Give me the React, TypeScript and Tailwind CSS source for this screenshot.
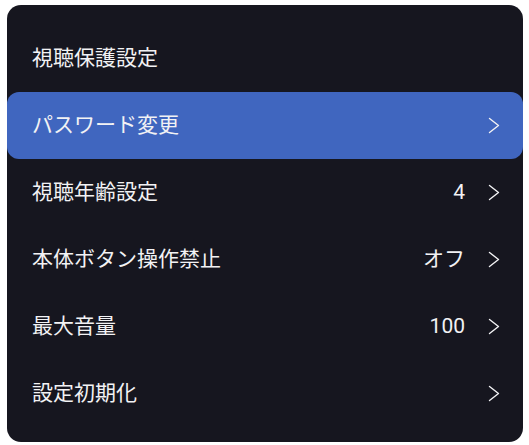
import React from "react";

type Row = { label: string; value?: string; active?: boolean };

const rows: Row[] = [
  { label: "パスワード変更", active: true },
  { label: "視聴年齢設定", value: "4" },
  { label: "本体ボタン操作禁止", value: "オフ" },
  { label: "最大音量", value: "100" },
  { label: "設定初期化" },
];

function Chevron() {
  return (
    <svg width="12" height="17" viewBox="0 0 12 17" fill="none" className="shrink-0">
      <path d="M1.5 1.5 L10.5 8.5 L1.5 15.5" stroke="currentColor" strokeWidth="1.4" strokeLinecap="round" strokeLinejoin="round" />
    </svg>
  );
}

export default function App() {
  return (
    <div
      className="w-[529px] h-[445px] bg-white pt-[5px] pl-[7px]"
      style={{ fontFamily: "Roboto, 'Noto Sans CJK JP', sans-serif" }}
    >
      <div className="w-[516px] h-[437px] rounded-[14px] bg-[#16161f] pt-[21px] text-[#f2f2f4]">
        {/* Title */}
        <div className="h-[66px] flex items-center pl-[25px] text-[21px]">視聴保護設定</div>

        {rows.map((r) => (
          <div
            key={r.label}
            className={
              "h-[67px] flex items-center pl-[25px] pr-[23px] text-[21px] " +
              (r.active ? "bg-[#4066bf] rounded-[12px]" : "")
            }
          >
            <span className="flex-1">{r.label}</span>
            {r.value && <span className="mr-[23px]">{r.value}</span>}
            <Chevron />
          </div>
        ))}
      </div>
    </div>
  );
}
